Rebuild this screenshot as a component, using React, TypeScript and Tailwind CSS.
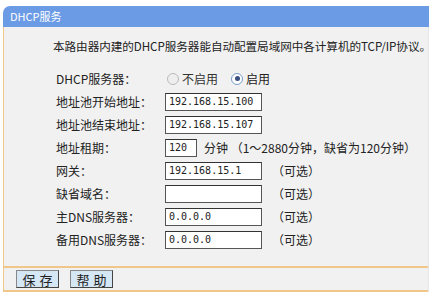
const cjk = 'font-["Noto_Sans_CJK_SC",sans-serif]'

function Field({ value, w = 'w-[97px]' }: { value: string; w?: string }) {
  return (
    <div className={`${w} h-[18px] border border-[#555] border-t-[#333] bg-white flex items-center pl-[3px] text-[10px] leading-none text-[#222] font-["DejaVu_Sans_Mono",monospace]`}>
      {value}
    </div>
  )
}

function Row({ label, children }: { label: string; children: React.ReactNode }) {
  return (
    <div className="flex items-center h-[23px]">
      <div className="w-[109px] shrink-0">{label}</div>
      {children}
    </div>
  )
}

const Opt = () => <span className="ml-[10px]">（可选）</span>

export default function App() {
  return (
    <div className={`w-[437px] h-[302px] bg-white pt-[6px] pl-[3px] ${cjk} text-[12px] text-[#222] overflow-hidden`}>
      <div className="w-[426px]">
        <div className="h-[21px] bg-[#6c9be6] rounded-tl-[7px] text-white text-[11px] flex items-center pl-[7px]">
          DHCP服务
        </div>
        <div className="bg-[#f1f1f1] border-l border-[#edc88a] border-r border-r-[#e6e6e6]">
          <div className="pt-[11px] pl-[49px] h-[40px] whitespace-nowrap text-[11.6px] tracking-[-0.05px]">
            本路由器内建的DHCP服务器能自动配置局域网中各计算机的TCP/IP协议。
          </div>
          <div className="pl-[52px] pb-[15px]">
            <Row label="DHCP服务器：">
              <div className="flex items-center gap-[3px] ml-[2px]">
                <span className="w-[12px] h-[12px] rounded-full border border-[#bbb] bg-[#eee]" />
                <span className="text-[#333]">不启用</span>
                <span className="w-[12px] h-[12px] rounded-full border border-[#7a9cc8] bg-white flex items-center justify-center ml-[10px]">
                  <span className="w-[5px] h-[5px] rounded-full bg-[#3a4f80]" />
                </span>
                <span>启用</span>
              </div>
            </Row>
            <Row label="地址池开始地址：">
              <Field value="192.168.15.100" />
            </Row>
            <Row label="地址池结束地址：">
              <Field value="192.168.15.107" />
            </Row>
            <Row label="地址租期：">
              <Field value="120" w="w-[32px]" />
              <span className="ml-[7px]">分钟 （1～2880分钟，缺省为120分钟）</span>
            </Row>
            <Row label="网关：">
              <Field value="192.168.15.1" />
              <Opt />
            </Row>
            <Row label="缺省域名：">
              <Field value="" />
              <Opt />
            </Row>
            <Row label="主DNS服务器：">
              <Field value="0.0.0.0" />
              <Opt />
            </Row>
            <Row label="备用DNS服务器：">
              <Field value="0.0.0.0" />
              <Opt />
            </Row>
          </div>
          <div className="border-t-2 border-b-2 border-[#f0c68a] h-[26px] flex items-center pl-[12px] gap-[11px]">
            <button className="w-[43px] h-[18px] bg-[#d5e6f4] border border-[#444] border-l-[#888] border-t-[#888] text-[13px] leading-none tracking-[4px] pl-[4px]">保存</button>
            <button className="w-[43px] h-[18px] bg-[#d5e6f4] border border-[#444] border-l-[#888] border-t-[#888] text-[13px] leading-none tracking-[4px] pl-[4px]">帮助</button>
          </div>
        </div>
      </div>
    </div>
  )
}
